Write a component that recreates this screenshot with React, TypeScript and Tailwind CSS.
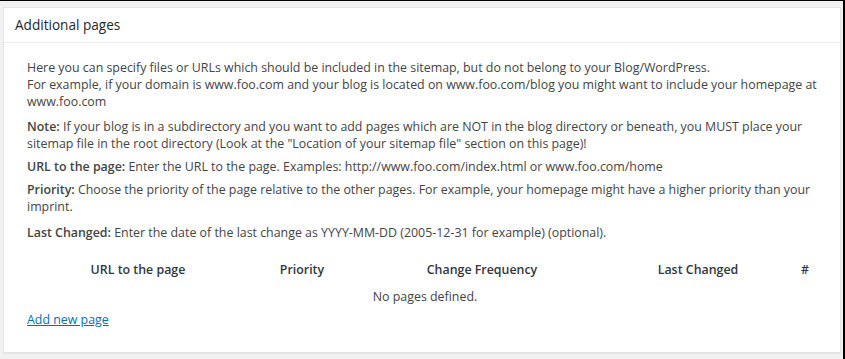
import React from "react";

const COLS = [
  { label: "URL to the page", w: "w-[222px]" },
  { label: "Priority", w: "w-[106px]" },
  { label: "Change Frequency", w: "w-[254px]" },
  { label: "Last Changed", w: "w-[178px]" },
  { label: "#", w: "w-[36px]" },
];

export default function App() {
  return (
    <div
      className="w-[845px] h-[359px] bg-[#f1f1f1] border-t border-black border-r-2 pt-[6px] pl-[3px] pr-[2px] overflow-hidden text-[#444]"
      style={{ fontFamily: '"Open Sans", "Noto Sans", sans-serif' }}
    >
      <div className="w-[838px] h-[346px] bg-white border border-[#e5e5e5] shadow-[0_1px_1px_rgba(0,0,0,0.04)]">
        {/* Header */}
        <div className="h-[35px] border-b border-[#eee] px-[11px] flex items-center">
          <h2 className="text-[13.6px] text-[#23282d] leading-none">Additional pages</h2>
        </div>

        {/* Body */}
        <div className="pl-[23px] pr-[12px] pt-[16px] text-[12.4px] leading-[17px]">
          <p>
            Here you can specify files or URLs which should be included in the sitemap, but do not belong to your Blog/WordPress.
            <br />
            For example, if your domain is www.foo.com and your blog is located on www.foo.com/blog you might want to include your homepage at www.foo.com
          </p>
          <p className="mt-[8px]">
            <span className="font-semibold">Note:</span> If your blog is in a subdirectory and you want to add pages which are NOT in the blog directory or beneath, you MUST place your sitemap file in the root directory (Look at the "Location of your sitemap file" section on this page)!
          </p>
          <p className="mt-[6px]">
            <span className="font-semibold">URL to the page:</span> Enter the URL to the page. Examples: http://www.foo.com/index.html or www.foo.com/home
          </p>
          <p className="mt-[6px]">
            <span className="font-semibold">Priority:</span> Choose the priority of the page relative to the other pages. For example, your homepage might have a higher priority than your imprint.
          </p>
          <p className="mt-[9px]">
            <span className="font-semibold">Last Changed:</span> Enter the date of the last change as YYYY-MM-DD (2005-12-31 for example) (optional).
          </p>

          {/* Table */}
          <div className="mt-[10px] w-[796px]">
            <div className="flex h-[36px] items-center">
              {COLS.map((c) => (
                <div key={c.label} className={`${c.w} text-center font-semibold text-[#32373c]`}>
                  {c.label}
                </div>
              ))}
            </div>
            <div className="h-[18px] flex items-center justify-center">No pages defined.</div>
          </div>

          <a href="#" className="block mt-[6px] w-fit text-[#0073aa] underline">
            Add new page
          </a>
        </div>
      </div>
    </div>
  );
}
